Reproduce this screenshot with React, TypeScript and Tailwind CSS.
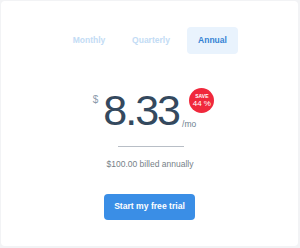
export default function App() {
  return (
    <div className="w-[300px] h-[248px] bg-[#f2f3f5] p-px" style={{ fontFamily: '"Liberation Sans", Arial, sans-serif' }}>
      <div className="w-[297px] h-[245px] bg-white rounded-sm flex flex-col items-center">
        <div className="flex items-center mt-[26px] ml-[2px] gap-[10px]">
          <div className="w-[52px] h-[27px] flex items-center justify-center text-[8.5px] font-bold text-[#c3dcf5]">Monthly</div>
          <div className="w-[52px] h-[27px] flex items-center justify-center text-[8.5px] font-bold text-[#c3dcf5]">Quarterly</div>
          <div className="w-[51px] h-[27px] flex items-center justify-center text-[8.5px] font-bold text-[#3583d4] bg-[#e9f3fd] rounded-sm">Annual</div>
        </div>
        <div className="flex items-baseline mt-[38px] ml-[-10px] text-[#34495e]">
          <span className="self-start text-[10px] text-[#8a9aab] mr-[5px]">$</span>
          <span className="relative text-[43px] leading-[36px] tracking-[-2px]">
            8.33
            <span className="absolute left-[86px] top-[-4px] w-[25px] h-[25px] rounded-full bg-[#f0283c] flex flex-col items-center justify-center text-white leading-none tracking-normal">
              <span className="text-[5px] font-bold">SAVE</span>
              <span className="text-[8px] mt-[1px]">44 %</span>
            </span>
          </span>
          <span className="text-[8.5px] text-[#6e7f90] ml-[3px] translate-y-[2px]">/mo</span>
        </div>
        <div className="w-[66px] h-px bg-[#b8bec6] mt-[17px] ml-[2px]" />
        <div className="text-[8.5px] text-[#777f88] mt-[11px] ml-[1px]">$100.00 billed annually</div>
        <button className="mt-[23px] w-[91px] h-[26px] bg-[#3a8ee6] rounded-sm text-white text-[8.6px] font-bold">Start my free trial</button>
      </div>
    </div>
  );
}
